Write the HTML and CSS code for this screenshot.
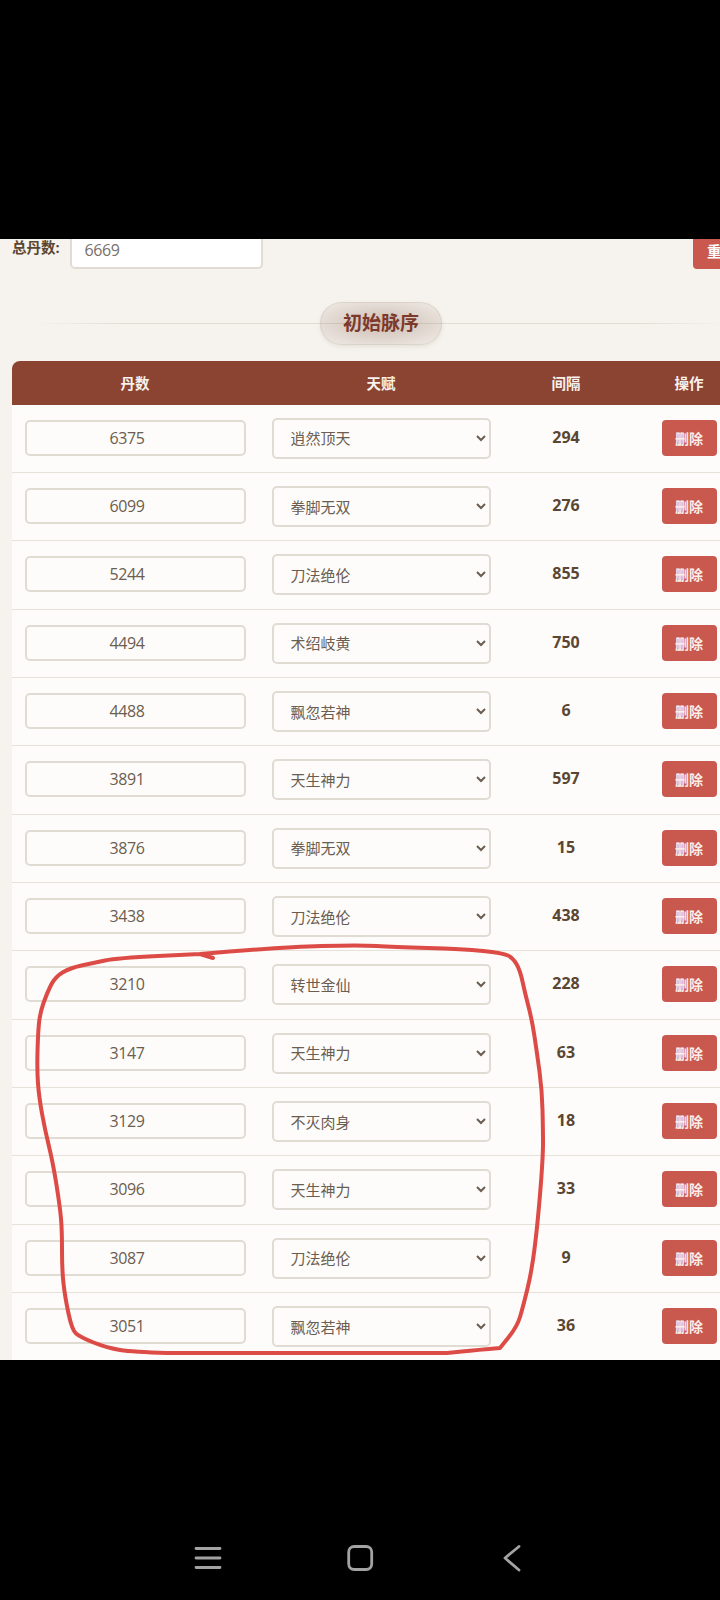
FILE: index.html
```html
<!DOCTYPE html>
<html lang="zh-CN">
<head>
<meta charset="utf-8">
<title>初始脉序</title>
<link rel="stylesheet" href="styles.css">
</head>
<body>
<div class="status-area"></div>
<main class="viewport">
  <div class="page">
    <div class="total-row">
      <label class="total-label">总丹数:</label>
      <input class="total-input" value="6669">
      <button class="reset-btn">重置</button>
    </div>
    <div class="section-title"><span class="pill">初始脉序</span></div>
    <div class="table">
      <div class="row head"><div class="cell">丹数</div><div class="cell">天赋</div><div class="cell">间隔</div><div class="cell">操作</div></div>
      <div class="row"><div class="cell"><input class="num" value="6375"></div><div class="cell"><select class="talent"><option>逍然顶天</option></select></div><div class="cell gap">294</div><div class="cell"><button class="del">删除</button></div></div>
      <div class="row"><div class="cell"><input class="num" value="6099"></div><div class="cell"><select class="talent"><option>拳脚无双</option></select></div><div class="cell gap">276</div><div class="cell"><button class="del">删除</button></div></div>
      <div class="row"><div class="cell"><input class="num" value="5244"></div><div class="cell"><select class="talent"><option>刀法绝伦</option></select></div><div class="cell gap">855</div><div class="cell"><button class="del">删除</button></div></div>
      <div class="row"><div class="cell"><input class="num" value="4494"></div><div class="cell"><select class="talent"><option>术绍岐黄</option></select></div><div class="cell gap">750</div><div class="cell"><button class="del">删除</button></div></div>
      <div class="row"><div class="cell"><input class="num" value="4488"></div><div class="cell"><select class="talent"><option>飘忽若神</option></select></div><div class="cell gap">6</div><div class="cell"><button class="del">删除</button></div></div>
      <div class="row"><div class="cell"><input class="num" value="3891"></div><div class="cell"><select class="talent"><option>天生神力</option></select></div><div class="cell gap">597</div><div class="cell"><button class="del">删除</button></div></div>
      <div class="row"><div class="cell"><input class="num" value="3876"></div><div class="cell"><select class="talent"><option>拳脚无双</option></select></div><div class="cell gap">15</div><div class="cell"><button class="del">删除</button></div></div>
      <div class="row"><div class="cell"><input class="num" value="3438"></div><div class="cell"><select class="talent"><option>刀法绝伦</option></select></div><div class="cell gap">438</div><div class="cell"><button class="del">删除</button></div></div>
      <div class="row"><div class="cell"><input class="num" value="3210"></div><div class="cell"><select class="talent"><option>转世金仙</option></select></div><div class="cell gap">228</div><div class="cell"><button class="del">删除</button></div></div>
      <div class="row"><div class="cell"><input class="num" value="3147"></div><div class="cell"><select class="talent"><option>天生神力</option></select></div><div class="cell gap">63</div><div class="cell"><button class="del">删除</button></div></div>
      <div class="row"><div class="cell"><input class="num" value="3129"></div><div class="cell"><select class="talent"><option>不灭肉身</option></select></div><div class="cell gap">18</div><div class="cell"><button class="del">删除</button></div></div>
      <div class="row"><div class="cell"><input class="num" value="3096"></div><div class="cell"><select class="talent"><option>天生神力</option></select></div><div class="cell gap">33</div><div class="cell"><button class="del">删除</button></div></div>
      <div class="row"><div class="cell"><input class="num" value="3087"></div><div class="cell"><select class="talent"><option>刀法绝伦</option></select></div><div class="cell gap">9</div><div class="cell"><button class="del">删除</button></div></div>
      <div class="row"><div class="cell"><input class="num" value="3051"></div><div class="cell"><select class="talent"><option>飘忽若神</option></select></div><div class="cell gap">36</div><div class="cell"><button class="del">删除</button></div></div>
    </div>
  </div>
</main>
<nav class="nav-bar">
  <svg class="nav-icon" viewBox="0 0 30 30"><path d="M3 5.500H27M3 15H27M3 24.500H27"/></svg>
  <svg class="nav-icon" viewBox="0 0 30 30"><rect x="3.700" y="3.500" width="23" height="23" rx="5.500"/></svg>
  <svg class="nav-icon" viewBox="0 0 30 30"><path d="M22 3.500L8 15L22 27"/></svg>
</nav>
<svg class="scribble" viewBox="0 0 720 1600"><path d="M213 958L200 954Q283 947 321.500 946Q360 945 376.500 946Q393 947 428 948Q463 949 483 951Q503 953 508 955.500Q513 958 516.500 964Q520 970 522.500 981.500Q525 993 528.500 1006.500Q532 1020 534.500 1036.500Q537 1053 539.500 1071.500Q542 1090 542.500 1110Q543 1130 543 1143.500Q543 1157 540.500 1188.500Q538 1220 535 1245Q532 1270 527.500 1288.500Q523 1307 520 1317Q517 1327 508 1338L500 1348Q477 1350 462 1351.500L447 1353L240 1353L167 1353Q133 1352 120 1350Q107 1348 93.500 1342.500Q80 1337 76 1333.500Q72 1330 68.500 1313.500Q65 1297 63.500 1283.500Q62 1270 62 1250Q62 1230 61 1218.500Q60 1207 56.500 1185Q53 1163 49 1146.500Q45 1130 42 1113.500Q39 1097 38 1083.500Q37 1070 37.500 1051.500Q38 1033 39 1023Q40 1013 43.500 1003Q47 993 51 985Q55 977 62.500 972.500Q70 968 81.500 965.500Q93 963 105 960.500Q117 958 158 956L200 954"/></svg>
</body>
</html>
```
FILE: styles.css
```css
* { box-sizing: border-box; }
html, body { margin: 0; padding: 0; }
body {
  position: relative;
  width: 720px;
  height: 1600px;
  background: #000;
  overflow: hidden;
  font-family: "Open Sans", "Noto Sans CJK SC", sans-serif;
  color: #5a4632;
}
.status-area { height: 239.3px; }
.viewport { height: 1120.7px; overflow: hidden; background: #f6f3ee; }
.page { margin-top: -7.3px; }
.total-row {
  display: flex;
  width: 748px;
  padding-left: 12px;
  align-items: flex-start;
}
.total-label {
  width: 57.500px;
  padding-top: 6px;
  font-size: 14.500px;
  line-height: 20px;
  font-weight: 700;
  color: #5a4632;
}
.total-input {
  width: 193.500px;
  height: 37px;
  padding: 0 0 2px 13px;
  border: 2px solid #e0dcd4;
  border-radius: 5px;
  background: #fff;
  font: 16px "Open Sans", "Noto Sans CJK SC", sans-serif;
  letter-spacing: -.4px;
  color: #77706a;
}
.reset-btn {
  width: 55px;
  height: 37px;
  margin-left: auto;
  padding: 0 0 0 14px;
  border: 0;
  border-radius: 4px;
  background: #c9584f;
  color: #fff;
  text-align: left;
  white-space: nowrap;
  font: 700 14.500px "Open Sans", "Noto Sans CJK SC", sans-serif;
}
.section-title {
  position: relative;
  display: flex;
  justify-content: center;
  width: 738px;
  margin: 33px 0 16px 12px;
}
.section-title::before {
  content: "";
  position: absolute;
  left: 0;
  right: 0;
  top: 21px;
  height: 1px;
  background: linear-gradient(90deg, transparent 3%, #e2dcd2 15%, #e2dcd2 85%, transparent 97%);
}
.pill {
  position: relative;
  width: 122px;
  height: 43px;
  border-radius: 22px;
  border: 1px solid rgba(150, 135, 120, .15);
  background: radial-gradient(ellipse at center, rgba(125, 85, 65, .34) 0, rgba(125, 85, 65, .09) 85%);
  box-shadow: 0 2px 4px rgba(90, 70, 50, .1);
  text-align: center;
  font-size: 19px;
  font-weight: 700;
  line-height: 41px;
  color: #7d3a2c;
}
.table {
  width: 738px;
  margin-left: 12px;
  border-radius: 8px 8px 0 0;
  overflow: hidden;
  background: #fdfcfa;
}
.row {
  display: grid;
  grid-template-columns: 246px 246px 124px 122px;
  height: 68.33px;
  border-bottom: 1.5px solid #e6e1d9;
}
.row.head {
  height: 43.6px;
  border-bottom: 0;
  background: #8b4332;
  color: #f8f1ea;
  font-size: 14.500px;
  font-weight: 700;
}
.row.head .cell { padding-bottom: 1px; }
.cell {
  display: flex;
  align-items: center;
  justify-content: center;
}
.num {
  width: 221px;
  height: 36px;
  margin-bottom: 1px;
  padding: 0 16px 0 0;
  border: 2px solid #e0dcd4;
  border-radius: 5px;
  background: #fdfcfa;
  text-align: center;
  font: 16px "Open Sans", "Noto Sans CJK SC", sans-serif;
  letter-spacing: -.4px;
  color: #6b5d50;
}
.talent {
  width: 219px;
  height: 41px;
  padding: 0 4px 0 13px;
  border: 2px solid #e0dcd4;
  border-radius: 5px;
  background-color: #fdfcfa;
  font: 15px "Open Sans", "Noto Sans CJK SC", sans-serif;
  color: #6b5d50;
}
.gap {
  padding-bottom: 3px;
  font-size: 16px;
  font-weight: 700;
  color: #5a4632;
}
.del {
  width: 55px;
  height: 36px;
  margin-bottom: 1px;
  padding: 0;
  border: 0;
  border-radius: 4px;
  background: #c9584f;
  color: #fbeee9;
  font: 700 14px "Open Sans", "Noto Sans CJK SC", sans-serif;
}
.nav-bar {
  display: flex;
  justify-content: center;
  gap: 122px;
  height: 240px;
  padding-top: 183px;
}
.nav-icon {
  width: 30px;
  height: 30px;
  fill: none;
  stroke: #a3a3a3;
  stroke-width: 2.800px;
  stroke-linecap: round;
  stroke-linejoin: round;
}
.scribble {
  position: absolute;
  left: 0;
  top: 0;
  width: 720px;
  height: 1600px;
  fill: none;
  stroke: #dd4b46;
  stroke-width: 4px;
  stroke-linecap: round;
  stroke-linejoin: round;
  pointer-events: none;
}
```
